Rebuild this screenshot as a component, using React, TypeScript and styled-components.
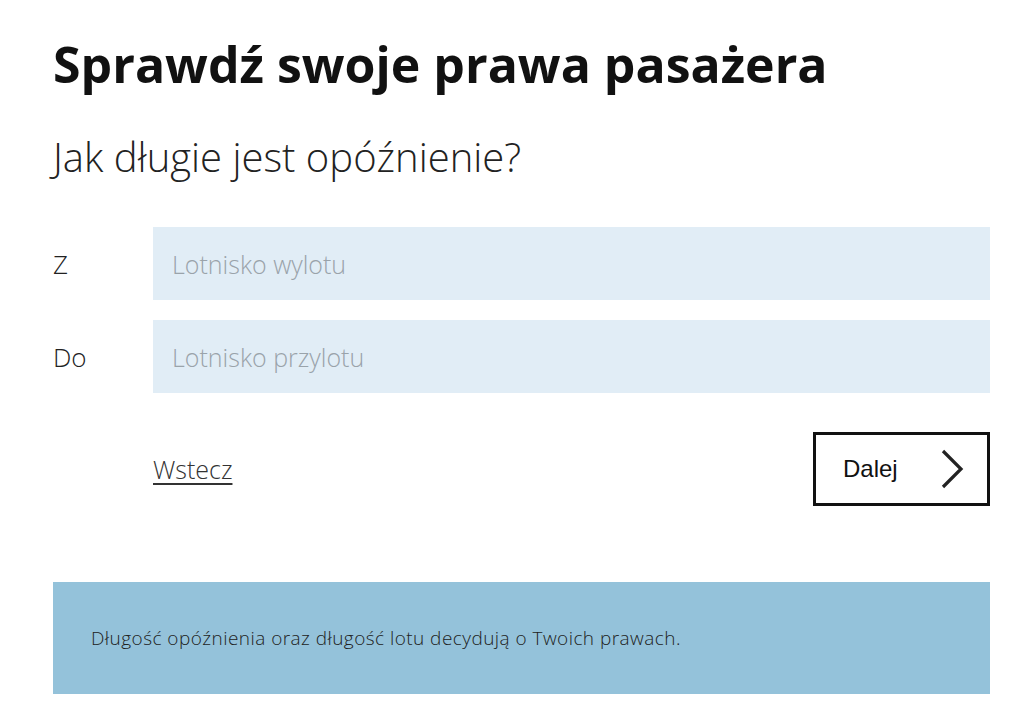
import React from "react";
import styled, { createGlobalStyle } from "styled-components";

const GlobalStyle = createGlobalStyle`
  body {
    margin: 0;
    background: #fff;
    font-family: "Open Sans", sans-serif;
    color: #111;
  }
`;

export default function App() {
  return (
    <>
      <GlobalStyle />
      <Page>
        <Title>Sprawdź swoje prawa pasażera</Title>
        <Subtitle>Jak długie jest opóźnienie?</Subtitle>
        <Form>
          <FieldRow>
            <FieldLabel>Z</FieldLabel>
            <FieldInput placeholder="Lotnisko wylotu" />
          </FieldRow>
          <FieldRow>
            <FieldLabel>Do</FieldLabel>
            <FieldInput placeholder="Lotnisko przylotu" />
          </FieldRow>
        </Form>
        <Actions>
          <BackLink href="#">Wstecz</BackLink>
          <NextButton>
            Dalej
            <svg width="26" height="40" viewBox="0 0 26 40" fill="none">
              <path d="M4 2 L22 20 L4 38" stroke="#222" strokeWidth="3.2" />
            </svg>
          </NextButton>
        </Actions>
        <InfoBox>Długość opóźnienia oraz długość lotu decydują o Twoich prawach.</InfoBox>
      </Page>
    </>
  );
}

const Page = styled.main`
  width: 937px;
  margin: 0 0 0 53px;
  padding-top: 30px;
`;
const Title = styled.h1`
  margin: 0;
  font-family: "Open Sans", sans-serif;
  font-weight: 700;
  font-size: 50px;
  line-height: 68px;
`;
const Subtitle = styled.h2`
  margin: 32px 0 0 0;
  font-family: "Open Sans", sans-serif;
  font-weight: 300;
  font-size: 40px;
  line-height: 54px;
  color: #222;
`;
const Form = styled.div`
  margin-top: 43px;
  display: flex;
  flex-direction: column;
  gap: 20px;
`;
const FieldRow = styled.div`
  display: flex;
  align-items: center;
`;
const FieldLabel = styled.label`
  width: 100px;
  font-weight: 300;
  font-size: 26px;
  color: #222;
`;
const FieldInput = styled.input`
  flex: 1;
  height: 73px;
  box-sizing: border-box;
  border: none;
  outline: none;
  background: #e1edf6;
  padding: 0 19px;
  font-family: "Open Sans", sans-serif;
  font-weight: 300;
  font-size: 25px;
  color: #222;
  &::placeholder {
    color: #9aa3aa;
  }
`;
const Actions = styled.div`
  margin-top: 39px;
  margin-left: 100px;
  display: flex;
  justify-content: space-between;
  align-items: center;
`;
const BackLink = styled.a`
  font-weight: 300;
  font-size: 25px;
  color: #333;
  text-decoration: underline;
  text-decoration-thickness: 2px;
  text-underline-offset: 4px;
`;
const NextButton = styled.button`
  width: 177px;
  height: 74px;
  box-sizing: border-box;
  border: 3px solid #111;
  background: #fff;
  display: flex;
  align-items: center;
  justify-content: space-between;
  padding: 0 22px 0 27px;
  font-family: "Liberation Sans", Arial, sans-serif;
  font-size: 24px;
  color: #111;
`;
const InfoBox = styled.div`
  margin-top: 76px;
  height: 112px;
  box-sizing: border-box;
  background: #94c2da;
  display: flex;
  align-items: center;
  padding: 0 38px;
  font-weight: 300;
  font-size: 19px;
  color: #222;
  letter-spacing: 0.45px;
`;
